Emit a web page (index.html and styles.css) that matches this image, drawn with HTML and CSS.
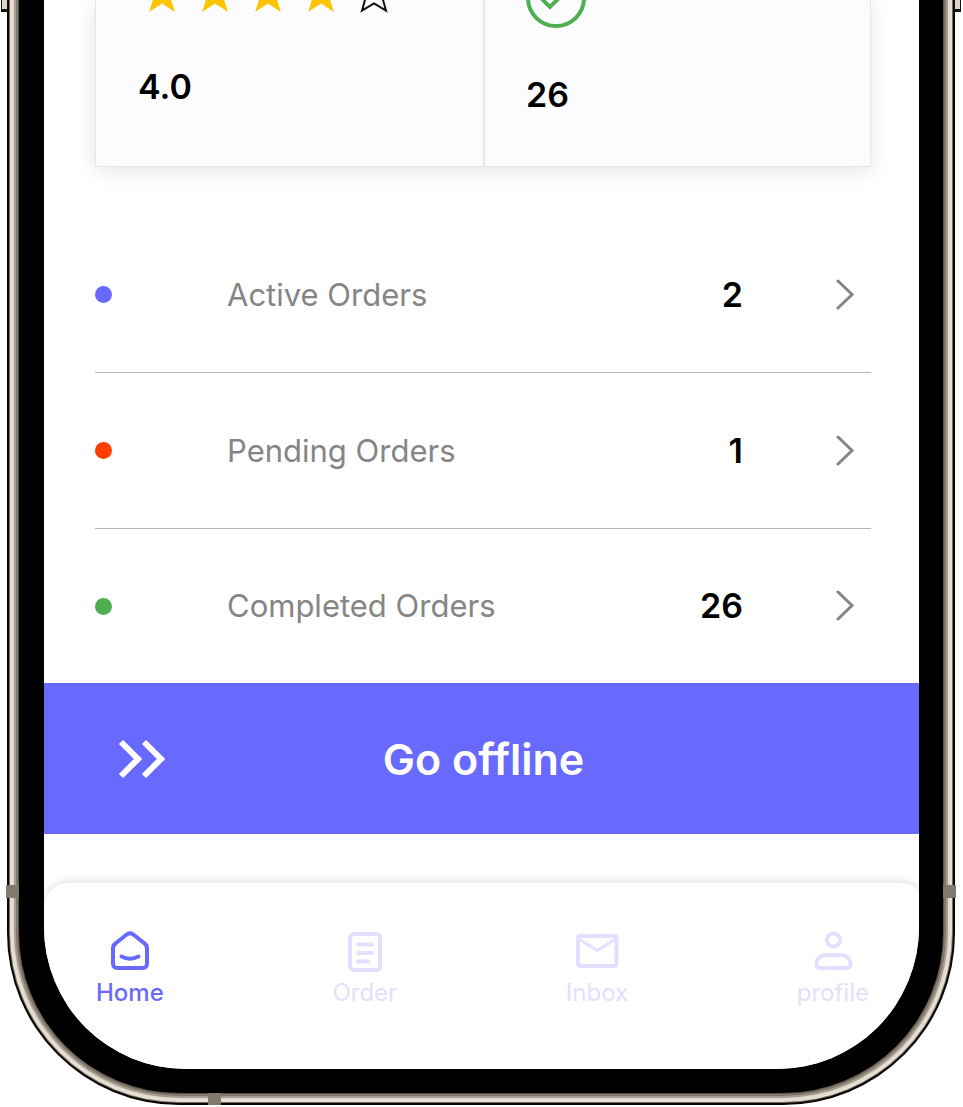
FILE: index.html
```html
<!DOCTYPE html>
<html lang="en">
<head>
<meta charset="utf-8">
<meta name="viewport" content="width=device-width, initial-scale=1">
<title>Home</title>
<link rel="stylesheet" href="styles.css">
</head>
<body>
<div class="phone">
  <span class="side-key side-key-left"></span>
  <span class="side-key side-key-right"></span>
  <div class="screen">
    <main class="content">
      <section class="stats">
        <div class="stat">
          <div class="stars">
            <svg class="star" viewBox="0 29 46 13"><path d="M23 1 27.9 16.2H43.9L31 25.6 35.9 41 23 32.500 10.1 41 15 25.6 2.1 16.2H18.1Z"/></svg>
            <svg class="star" viewBox="0 29 46 13"><path d="M23 1 27.9 16.2H43.9L31 25.6 35.9 41 23 32.500 10.1 41 15 25.6 2.1 16.2H18.1Z"/></svg>
            <svg class="star" viewBox="0 29 46 13"><path d="M23 1 27.9 16.2H43.9L31 25.6 35.9 41 23 32.500 10.1 41 15 25.6 2.1 16.2H18.1Z"/></svg>
            <svg class="star" viewBox="0 29 46 13"><path d="M23 1 27.9 16.2H43.9L31 25.6 35.9 41 23 32.500 10.1 41 15 25.6 2.1 16.2H18.1Z"/></svg>
            <svg class="star star-empty" viewBox="0 29 46 13"><path d="M23 4 27.3 17.2H41.2L31 25.3 35 39.6 23 32.500 11 39.6 15 25.3 4.8 17.2H18.7Z"/></svg>
          </div>
          <strong class="stat-value">4.0</strong>
        </div>
        <div class="stat stat-done">
          <svg class="done-icon" viewBox="0 32 60 29"><circle cx="30" cy="30" r="28"/><path d="M12 27 24 39 46 17"/></svg>
          <strong class="stat-value">26</strong>
        </div>
      </section>
      <ul class="orders">
        <li><a class="order-row" href="#active">
          <span class="dot dot-active"></span><span class="order-name">Active Orders</span><strong class="order-count">2</strong>
          <svg class="chevron" viewBox="0 0 20 32"><path d="M3 2 17 15.500 3 29"/></svg>
        </a></li>
        <li><a class="order-row" href="#pending">
          <span class="dot dot-pending"></span><span class="order-name">Pending Orders</span><strong class="order-count">1</strong>
          <svg class="chevron" viewBox="0 0 20 32"><path d="M3 2 17 15.500 3 29"/></svg>
        </a></li>
        <li><a class="order-row" href="#completed">
          <span class="dot dot-completed"></span><span class="order-name">Completed Orders</span><strong class="order-count">26</strong>
          <svg class="chevron" viewBox="0 0 20 32"><path d="M3 2 17 15.500 3 29"/></svg>
        </a></li>
      </ul>
    </main>
    <button class="offline" type="button">
      <svg class="double-chevron" viewBox="0 0 48 40"><path d="M3 3 20 20 3 37M26 3 43 20 26 37"/></svg>
      <span>Go offline</span>
    </button>
    <nav class="tabs">
      <a class="tab tab-current" href="#home">
        <svg class="tab-icon" viewBox="0 0 48 44"><path d="M7 19.500Q7 16 10 14L21 5.300Q24 3.300 27 5.300L38 14Q41 16 41 19.500V34.500Q41 39 36.500 39H11.500Q7 39 7 34.500Z"/><path d="M15.500 27.500Q24 32 32.500 27.500"/></svg>
        <span>Home</span>
      </a>
      <a class="tab" href="#order">
        <svg class="tab-icon" viewBox="0 0 48 44"><rect x="9" y="5" width="30" height="36" rx="3.500"/><path d="M17 15.500H31M17 24H31M17 32.500H27"/></svg>
        <span>Order</span>
      </a>
      <a class="tab" href="#inbox">
        <svg class="tab-icon" viewBox="0 0 48 44"><rect x="5" y="7" width="38.500" height="30" rx="2"/><path class="thin" d="M6 10 24.200 21.500 42.500 10"/></svg>
        <span>Inbox</span>
      </a>
      <a class="tab" href="#profile">
        <svg class="tab-icon" viewBox="0 0 48 44"><circle cx="24.500" cy="11" r="6.500"/><path d="M16.500 26H32.500Q41.500 27 41.500 35Q41.500 39 37.500 39H11.500Q7.500 39 7.500 35Q7.500 27 16.500 26Z"/></svg>
        <span>profile</span>
      </a>
    </nav>
  </div>
  <span class="band band-left"></span>
  <span class="band band-right"></span>
  <span class="band band-bottom"></span>
</div>
</body>
</html>
```
FILE: styles.css
```css
* {
  box-sizing: border-box;
}

body {
  margin: 0;
  overflow-x: hidden;
  background: #fff;
  font-family: Inter, "Open Sans", sans-serif;
  color: #000;
}

a {
  color: inherit;
  text-decoration: none;
}

svg {
  display: block;
  flex: none;
  fill: none;
}

/* Phone body: black bezel with a titanium rail built from stacked rings */
.phone {
  position: relative;
  margin: 0 20px 14px 19px;
  padding: 0 24px 24px 25px;
  background: #000;
  border-radius: 0 0 160px 160px;
  box-shadow:
    0 0 0 1px #5e5549,
    0 0 0 3px #81776a,
    0 0 0 5px #a69c8f,
    0 0 0 7px #e1dbd1,
    0 0 0 9px #e6dfd5,
    0 0 0 10px #766d60,
    0 0 0 12px #080604;
}

.screen {
  overflow: hidden;
  background: #fff;
  border-radius: 0 0 142px 142px;
}

.side-key {
  position: absolute;
  top: 0;
  width: 7px;
  height: 12px;
  background: #ded6ca;
  border: 1px solid #17120d;
  border-width: 0 1px 3px;
}

.side-key-left {
  left: -18px;
}

.side-key-right {
  right: -18px;
}

.band {
  position: absolute;
  background: #81796c;
}

.band-left,
.band-right {
  bottom: 195px;
  width: 13px;
  height: 13px;
}

.band-left {
  left: -13px;
}

.band-right {
  right: -13px;
}

.band-bottom {
  left: 189px;
  bottom: -12px;
  width: 13px;
  height: 12px;
}

.content {
  padding: 0 48px 0 51px;
}

/* Rating and completed totals */
.stats {
  display: grid;
  grid-template-columns: 1fr 1fr;
  background: #fcfcfe;
  border: 1px solid #e6e6e8;
  border-top: 0;
  box-shadow: 0 4px 20px rgba(0, 0, 0, 0.1);
}

.stat {
  padding: 0 42px 59px;
}

.stat-done {
  border-left: 2px solid #e6e6e8;
  padding-left: 41px;
  padding-bottom: 51px;
}

.stars {
  display: flex;
  gap: 7px;
  height: 13px;
  padding-left: 1px;
}

.star {
  width: 46px;
  height: 13px;
  fill: #ffc400;
}

.star-empty {
  fill: none;
  stroke: #111;
  stroke-width: 2;
}

.done-icon {
  width: 60px;
  height: 29px;
  stroke: #4caf50;
  stroke-width: 4;
}

.stat-value {
  display: block;
  margin-top: 54px;
  font-size: 34px;
  line-height: 40px;
  font-weight: 600;
}

.stat-done .stat-value {
  margin-top: 46px;
}

/* Order list */
.orders {
  margin: 50px 0 0;
  padding: 0;
  list-style: none;
}

.orders li + li {
  border-top: 1px solid #b4b4b4;
}

.order-row {
  display: flex;
  align-items: center;
  height: 155px;
  padding-right: 16px;
}

.orders li:last-child .order-row {
  height: 154px;
}

.dot {
  flex: none;
  width: 17px;
  height: 17px;
  border-radius: 50%;
}

.dot-active {
  background: #6869ff;
}

.dot-pending {
  background: #ff3d00;
}

.dot-completed {
  background: #4caf50;
}

.order-name {
  flex: 1;
  margin-left: 115px;
  font-size: 31px;
  line-height: 40px;
  color: #858585;
}

.order-count {
  font-size: 34px;
  line-height: 40px;
  font-weight: 600;
}

.chevron {
  width: 20px;
  height: 32px;
  margin-left: 92px;
  stroke: #858585;
  stroke-width: 3;
  stroke-linecap: round;
}

/* Availability switch */
.offline {
  display: grid;
  grid-template-columns: 1fr auto 1fr;
  align-items: center;
  width: 100%;
  height: 151px;
  padding: 0 70px 0 74px;
  border: 0;
  background: #6869ff;
  color: #fff;
  font-family: inherit;
  font-size: 43px;
  line-height: 48px;
  font-weight: 600;
}

.double-chevron {
  width: 48px;
  height: 40px;
  stroke: #fff;
  stroke-width: 6;
}

/* Bottom navigation */
.tabs {
  display: flex;
  justify-content: space-between;
  margin: 49px -6px 0 0;
  padding: 46px 56px 62px 52px;
  background: #fff;
  border-radius: 24px 24px 0 0;
  box-shadow: 0 -2px 8px rgba(0, 0, 0, 0.12);
}

.tab {
  display: flex;
  flex-direction: column;
  align-items: center;
  gap: 6px;
  color: #e1e0ff;
  font-size: 24px;
  line-height: 28px;
}

.tab-current {
  color: #6869ff;
  font-weight: 500;
}

.tab-icon {
  width: 48px;
  height: 44px;
  stroke: currentColor;
  stroke-width: 4;
  stroke-linecap: round;
  stroke-linejoin: round;
}

.thin {
  stroke-width: 3;
}
```
